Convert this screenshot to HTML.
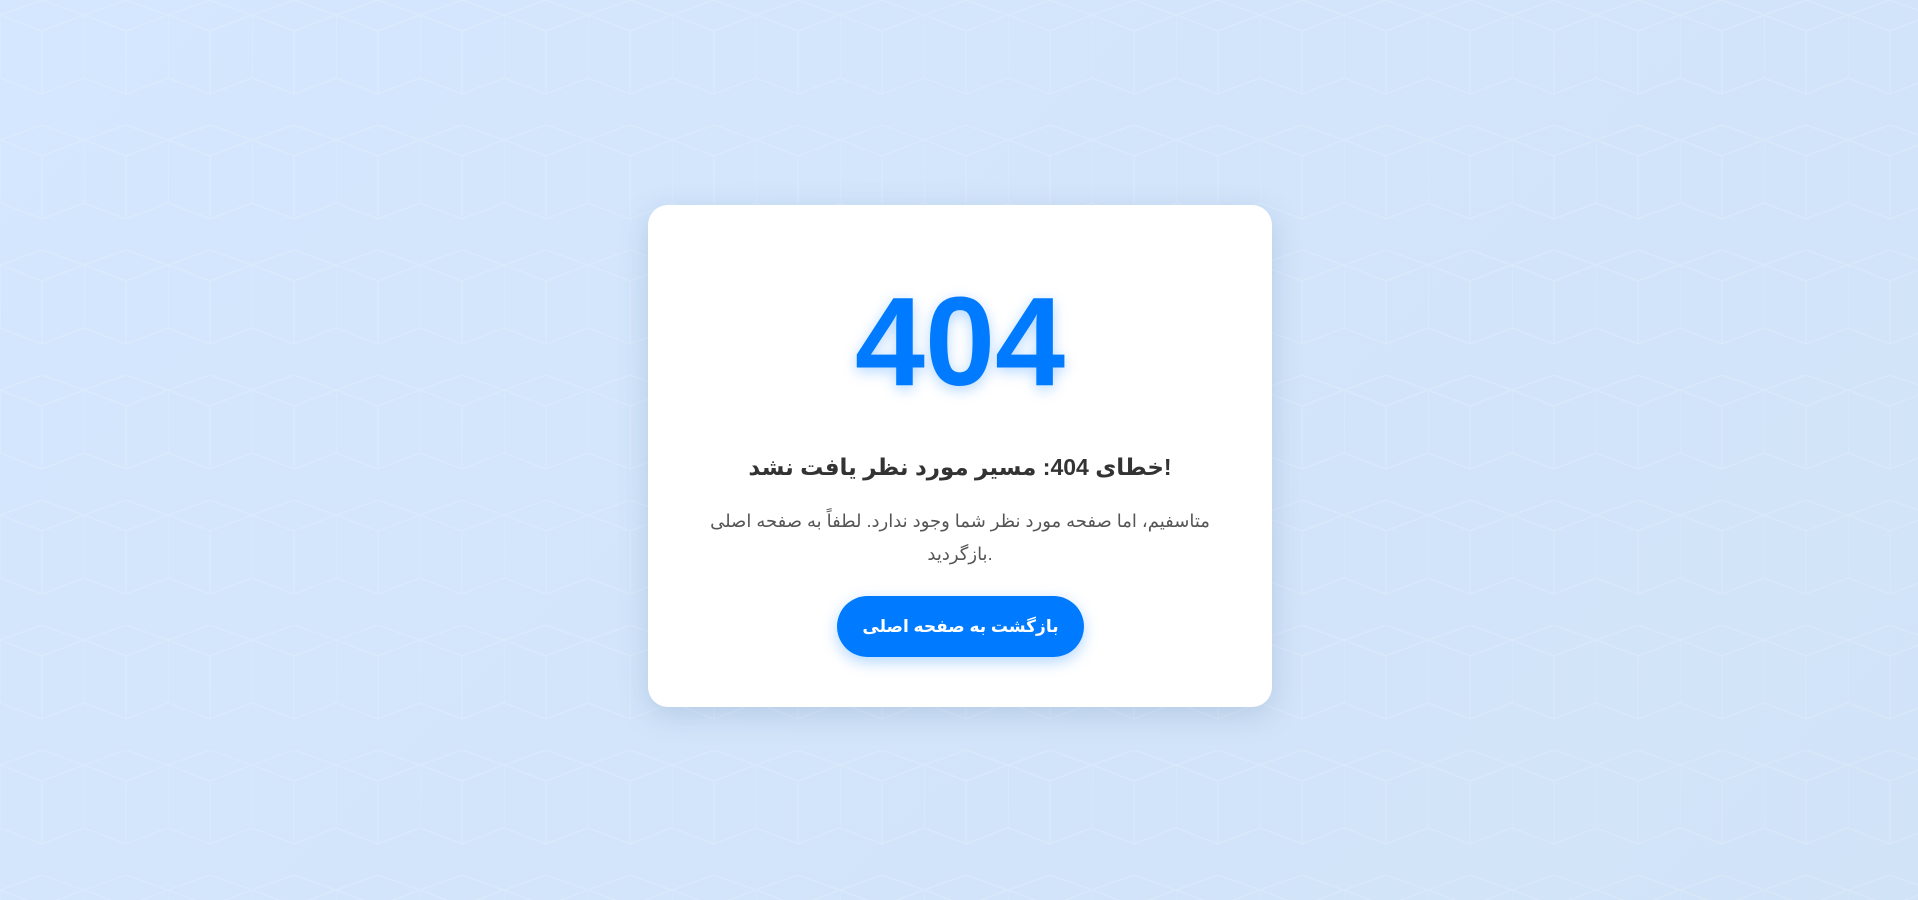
<!DOCTYPE html>
<html lang="fa"><head><meta charset="utf-8">
<style>
html,body{margin:0;width:1918px;height:900px;overflow:hidden}
body{background:linear-gradient(135deg,#d4e7fe 0%,#d1e3f7 100%);font-family:"Liberation Sans","DejaVu Sans",sans-serif;position:relative;direction:ltr}
svg.bg{position:absolute;left:0;top:0}
.card{position:absolute;left:648px;top:205px;width:624px;height:502px;background:#fff;border-radius:20px;box-shadow:0 8px 30px rgba(80,110,160,.22);text-align:center}
.big{position:absolute;left:0;right:0;top:62px;font-size:126px;font-weight:bold;color:#007bff;text-shadow:0 4px 14px rgba(0,123,255,.3);line-height:150px}
h1{position:absolute;left:0;right:0;top:245px;margin:0;font-size:23px;font-weight:bold;color:#333;line-height:34px;white-space:nowrap}
p{position:absolute;left:40px;right:40px;top:300px;margin:0;font-size:18px;color:#555;line-height:33px}
.btn{position:absolute;left:189px;top:391px;width:247px;height:61px;border-radius:31px;background:#007bff;color:#fff;font-weight:bold;font-size:17px;line-height:61px;white-space:nowrap;box-shadow:0 5px 15px rgba(0,123,255,.3)}
</style></head><body>
<svg class="bg" width="1918" height="900"><defs><pattern id="h" width="84" height="125" patternUnits="userSpaceOnUse"><path d="M0 15 L42 0 L84 15 M0 15 V78 M42 31 L0 15 M42 31 L84 15 M42 31 V94 M0 78 L42 94 L84 78" stroke="rgba(255,255,255,.15)" stroke-width="1.5" fill="none"/></pattern></defs><rect width="1918" height="900" fill="url(#h)"/></svg>
<div class="card">
<div class="big">404</div>
<h1>خطای 404: مسیر مورد نظر یافت نشد!</h1>
<p>متاسفیم، اما صفحه مورد نظر شما وجود ندارد. لطفاً به صفحه اصلی بازگردید.</p>
<div class="btn">بازگشت به صفحه اصلی</div>
</div>
</body></html>
